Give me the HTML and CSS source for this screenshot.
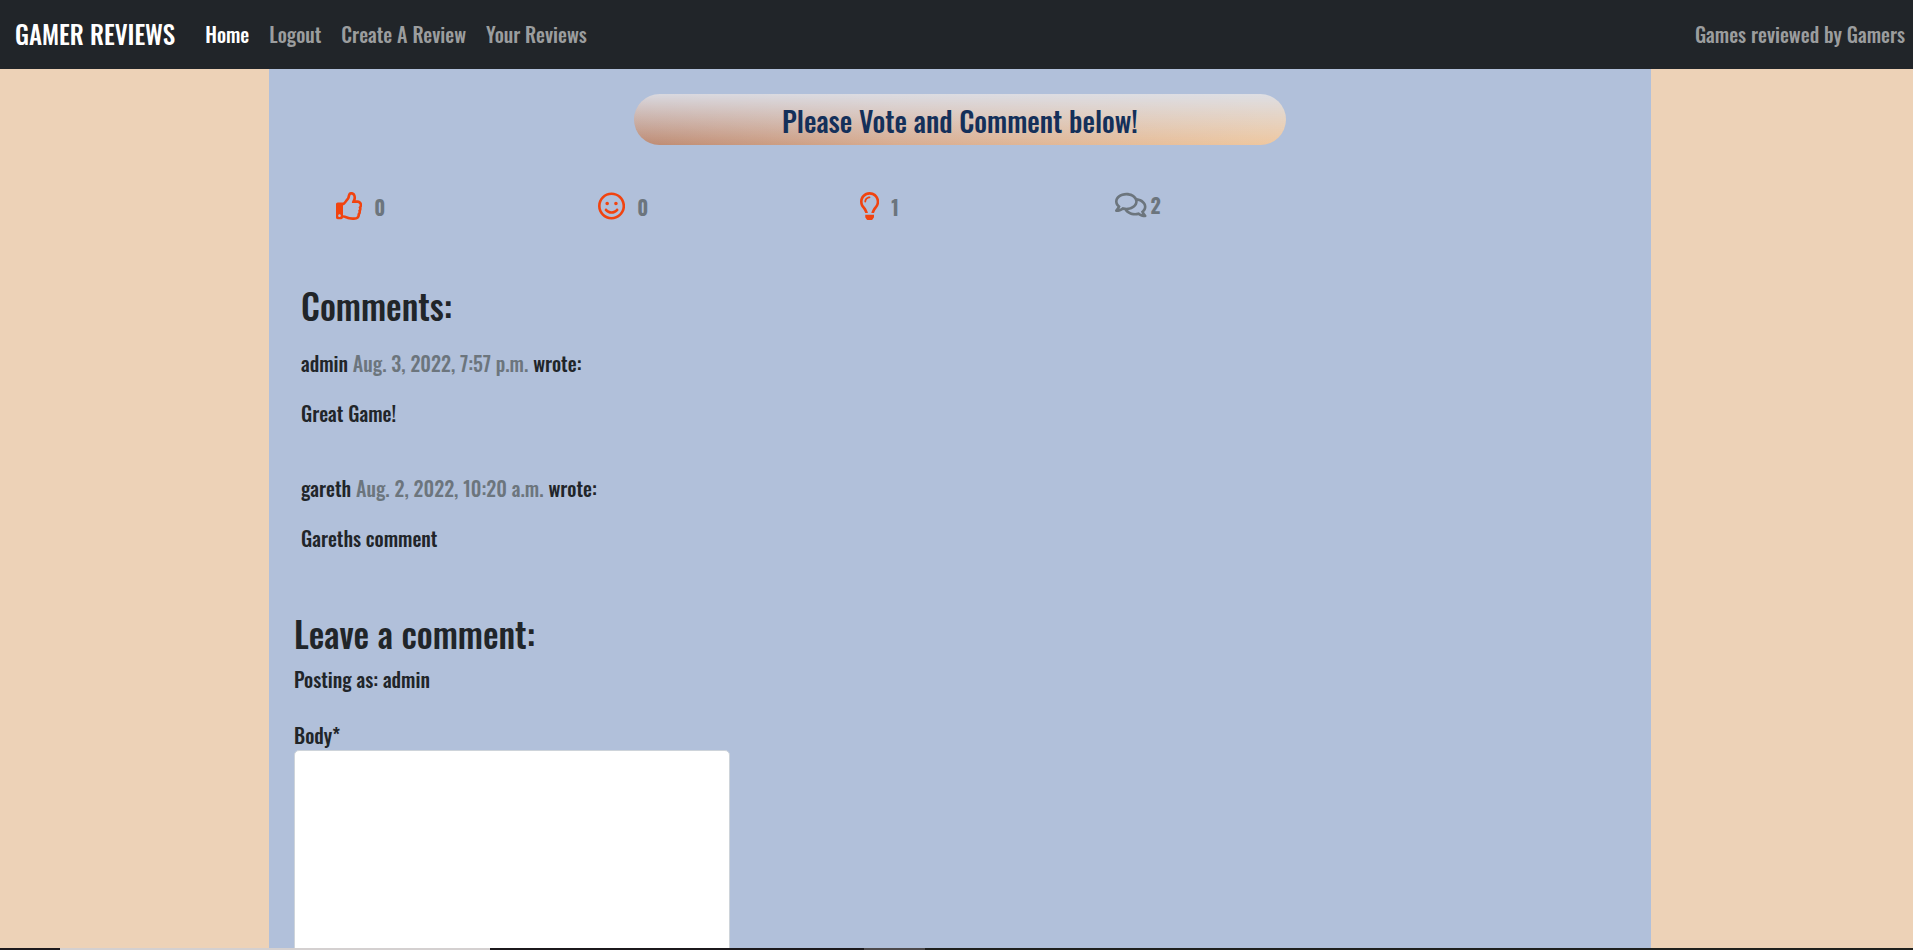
FILE: index.html
```html
<!DOCTYPE html>
<html lang="en">
<head>
<meta charset="utf-8">
<title>Gamer Reviews</title>
<link rel="stylesheet" href="styles.css">
</head>
<body>
<header class="navbar">
  <a class="brand" href="#">GAMER REVIEWS</a>
  <nav class="nav-links">
    <a class="active" href="#">Home</a>
    <a href="#">Logout</a>
    <a href="#">Create A Review</a>
    <a href="#">Your Reviews</a>
  </nav>
  <span class="tagline">Games reviewed by Gamers</span>
</header>
<main class="page">
  <h2 class="banner">Please Vote and Comment below!</h2>
  <div class="votes">
    <button class="vote" type="button" aria-label="Like">
      <svg class="icon" viewBox="0 0 480 512"><path d="M466.27 286.69C475.04 271.84 480 256 480 236.85c0-44.015-37.218-85.58-85.82-85.58H357.7c4.92-12.81 8.85-28.13 8.85-46.54C366.55 31.936 328.86 0 271.28 0c-61.607 0-58.093 94.933-71.76 108.6-22.747 22.747-49.615 66.447-68.76 83.4H32c-17.673 0-32 14.327-32 32v240c0 17.673 14.327 32 32 32h64c14.893 0 27.408-10.174 30.978-23.95 44.509 1.001 75.06 39.94 177.802 39.94 7.22 0 15.22.01 22.22.01 77.117 0 111.986-39.423 112.94-95.33 13.319-18.425 20.299-43.122 17.34-66.99 9.854-18.452 13.664-40.343 8.99-62.99zm-61.75 53.83c12.56 21.13 1.26 49.41-13.94 57.57 7.7 48.78-17.608 65.9-53.12 65.9h-37.82c-71.639 0-118.029-37.82-171.64-37.82V240h10.92c28.36 0 67.98-70.89 94.54-97.46 28.36-28.36 18.91-75.63 37.82-94.54 47.27 0 47.27 32.98 47.27 56.73 0 39.17-28.36 56.72-28.36 94.54h103.99c21.11 0 37.73 18.91 37.82 37.82.09 18.9-12.82 37.81-22.27 37.81 13.489 14.555 16.371 45.236-5.21 65.62zM88 432c0 13.255-10.745 24-24 24s-24-10.745-24-24 10.745-24 24-24 24 10.745 24 24z"/></svg>
      <span>0</span>
    </button>
    <button class="vote" type="button" aria-label="Fun">
      <svg class="icon" viewBox="0 0 496 512"><path d="M248 8C111 8 0 119 0 256s111 248 248 248 248-111 248-248S385 8 248 8zm0 448c-110.3 0-200-89.7-200-200S137.700 56 248 56s200 89.700 200 200-89.700 200-200 200zm-80-216c17.700 0 32-14.300 32-32s-14.300-32-32-32-32 14.300-32 32 14.300 32 32 32zm160 0c17.700 0 32-14.300 32-32s-14.300-32-32-32-32 14.300-32 32 14.300 32 32 32zm4 72.600c-20.800 25-51.500 39.400-84 39.400s-63.200-14.300-84-39.400c-8.500-10.200-23.700-11.500-33.800-3.100-10.200 8.500-11.500 23.600-3.100 33.800 30 36 74.100 56.600 120.900 56.600s90.900-20.600 120.900-56.600c8.500-10.200 7.100-25.300-3.100-33.800-10.100-8.400-25.300-7.100-33.800 3.100z"/></svg>
      <span>0</span>
    </button>
    <button class="vote" type="button" aria-label="Insightful">
      <svg class="icon" viewBox="0 0 352 512"><path d="M176 80c-52.940 0-96 43.060-96 96 0 8.840 7.160 16 16 16s16-7.160 16-16c0-35.300 28.720-64 64-64 8.840 0 16-7.160 16-16s-7.160-16-16-16zM96.060 459.170c0 3.150.930 6.220 2.680 8.840l24.510 36.840c2.970 4.460 7.970 7.140 13.320 7.140h78.850c5.360 0 10.360-2.680 13.320-7.140l24.510-36.840c1.740-2.620 2.670-5.700 2.680-8.840l.050-43.180H96.020l.040 43.180zM176 0C73.720 0 0 82.970 0 176c0 44.370 16.450 84.850 43.560 115.780 16.640 18.990 42.740 58.800 52.420 92.160v.060h48v-.120c-.010-4.770-.720-9.510-2.150-14.070-5.590-17.810-22.820-64.770-62.170-109.670-20.540-23.430-31.520-53.150-31.610-84.140C47.850 102.360 107.720 48 176 48c70.580 0 128 57.420 128 128 0 30.970-11.240 60.850-31.650 84.140-39.110 44.610-56.420 91.470-62.100 109.460a47.507 47.507 0 0 0-2.220 14.300v.100h48v-.050c9.680-33.370 35.780-73.180 52.420-92.160C335.550 260.850 352 220.370 352 176 352 78.800 273.200 0 176 0z"/></svg>
      <span>1</span>
    </button>
    <div class="vote total">
      <svg class="icon" viewBox="0 0 576 512"><path d="M532 386.2c27.5-27.1 44-61.1 44-98.2 0-80-76.5-146.1-176.2-157.9C368.3 72.5 294.3 32 208 32 93.1 32 0 103.6 0 192c0 37 16.5 71 44 98.2-15.3 30.7-37.3 54.5-37.7 54.9-6.3 6.7-8.1 16.5-4.4 25 3.6 8.5 12 14 21.2 14 53.5 0 96.7-20.2 125.2-38.8 9.2 2.1 18.7 3.7 28.4 4.9C208.1 407.6 281.8 448 368 448c20.8 0 40.8-2.4 59.8-6.8C456.3 459.7 499.4 480 553 480c9.2 0 17.500-5.500 21.200-14 3.600-8.500 1.900-18.300-4.400-25-.4-.3-22.500-24.100-37.800-54.800zm-392.800-92.300L122.100 305c-14.100 9.100-28.500 16.300-43.100 21.400 2.700-4.700 5.400-9.700 8-14.800l15.500-31.100L77.700 256C64.200 242.600 48 220.700 48 192c0-60.700 73.300-112 160-112s160 51.300 160 112-73.300 112-160 112c-16.500 0-33-1.900-49-5.600l-19.800-4.500zM498.300 352l-24.700 24.400 15.500 31.100c2.600 5.100 5.300 10.100 8 14.800-14.600-5.100-29-12.300-43.100-21.400l-17.100-11.100-19.900 4.600c-16 3.700-32.500 5.600-49 5.600-54 0-102.200-20.100-131.300-49.700C338 339.500 416 272.900 416 192c0-3.400-.4-6.700-.7-10C479.700 196.500 528 238.800 528 288c0 28.700-16.200 50.600-29.700 64z"/></svg>
      <span>2</span>
    </div>
  </div>
  <section class="comments">
    <h3>Comments:</h3>
    <article class="comment">
      <p>admin <time>Aug. 3, 2022, 7:57 p.m.</time> wrote:</p>
      <p>Great Game!</p>
    </article>
    <article class="comment">
      <p>gareth <time>Aug. 2, 2022, 10:20 a.m.</time> wrote:</p>
      <p>Gareths comment</p>
    </article>
  </section>
  <form class="comment-form">
    <h3>Leave a comment:</h3>
    <p>Posting as: admin</p>
    <label for="body">Body*</label>
    <textarea id="body" rows="10"></textarea>
  </form>
</main>
<footer class="edge"></footer>
</body>
</html>
```
FILE: styles.css
```css
* { box-sizing: border-box; }

body {
  margin: 0;
  height: 100vh;
  display: flex;
  flex-direction: column;
  overflow: hidden;
  background: #edd2b7;
  color: #212529;
  font-family: Oswald, "Roboto Condensed", "Liberation Sans Narrow", "Liberation Sans", sans-serif;
  font-size: 20px;
  font-weight: 500;
  line-height: 30px;
}

h2, h3, p { margin: 0; }

.navbar {
  flex: none;
  display: flex;
  align-items: center;
  padding: 15px 8px 16px 15px;
  background: #212529;
  line-height: 38px;
}
.navbar a { text-decoration: none; }
.brand { margin-right: 30px; color: #fff; font-size: 25px; }
.nav-links { display: flex; gap: 20px; }
.nav-links a, .tagline { color: #9b9d9e; }
.nav-links .active { color: #fff; }
.tagline { margin-left: auto; }

.page {
  flex: 1;
  min-height: 0;
  overflow: hidden;
  margin: 0 262px 0 269px;
  padding: 25px;
  background: #b1c0da;
}

.banner {
  width: 49%;
  margin: 0 auto;
  padding: 9px 8px 7px;
  border-radius: 26px;
  background:
    linear-gradient(to bottom, rgba(220, 225, 235, 0.9), rgba(220, 225, 235, 0)),
    linear-gradient(to right, #bd8a72, #d8ac90 40%, #efc8a0);
  color: #14305a;
  font-size: 28px;
  font-weight: 500;
  line-height: 35px;
  text-align: center;
}

.votes {
  display: grid;
  grid-template-columns: 262px 262px 255px 262px;
  align-items: start;
  padding: 45px 0 0 42px;
}
.vote {
  display: flex;
  align-items: center;
  gap: 12px;
  padding: 0;
  border: 0;
  background: none;
  color: #6c757d;
  font: inherit;
  font-weight: 700;
}
.icon { height: 28px; fill: #f1430f; }
.vote span { padding-top: 2px; }
.total { gap: 4px; }
.total .icon { fill: #6c757d; }
.total span { padding-top: 0; }

.comments { padding: 62px 7px 0; }
h3 { font-size: 35px; font-weight: 500; line-height: 42px; }
.comments h3 { margin-bottom: 22px; }
.comment { display: grid; gap: 20px; margin-bottom: 45px; }
time { color: #6c757d; }

.comment-form { padding-top: 14px; }
.comment-form h3 { margin-bottom: 10px; }
.comment-form label { display: block; margin-top: 26px; }
textarea {
  display: block;
  width: 436px;
  max-width: 100%;
  padding: 8px 15px;
  border: 1px solid #ced4da;
  border-radius: 5px;
  background: #fff;
  font: inherit;
  resize: none;
}

.edge {
  flex: none;
  height: 2px;
  background: linear-gradient(to right, #1c191c 60px, #d4d0d0 60px 490px, #1c191c 490px 864px, #4d4a4c 864px 925px, #1f201d 925px);
}
```
